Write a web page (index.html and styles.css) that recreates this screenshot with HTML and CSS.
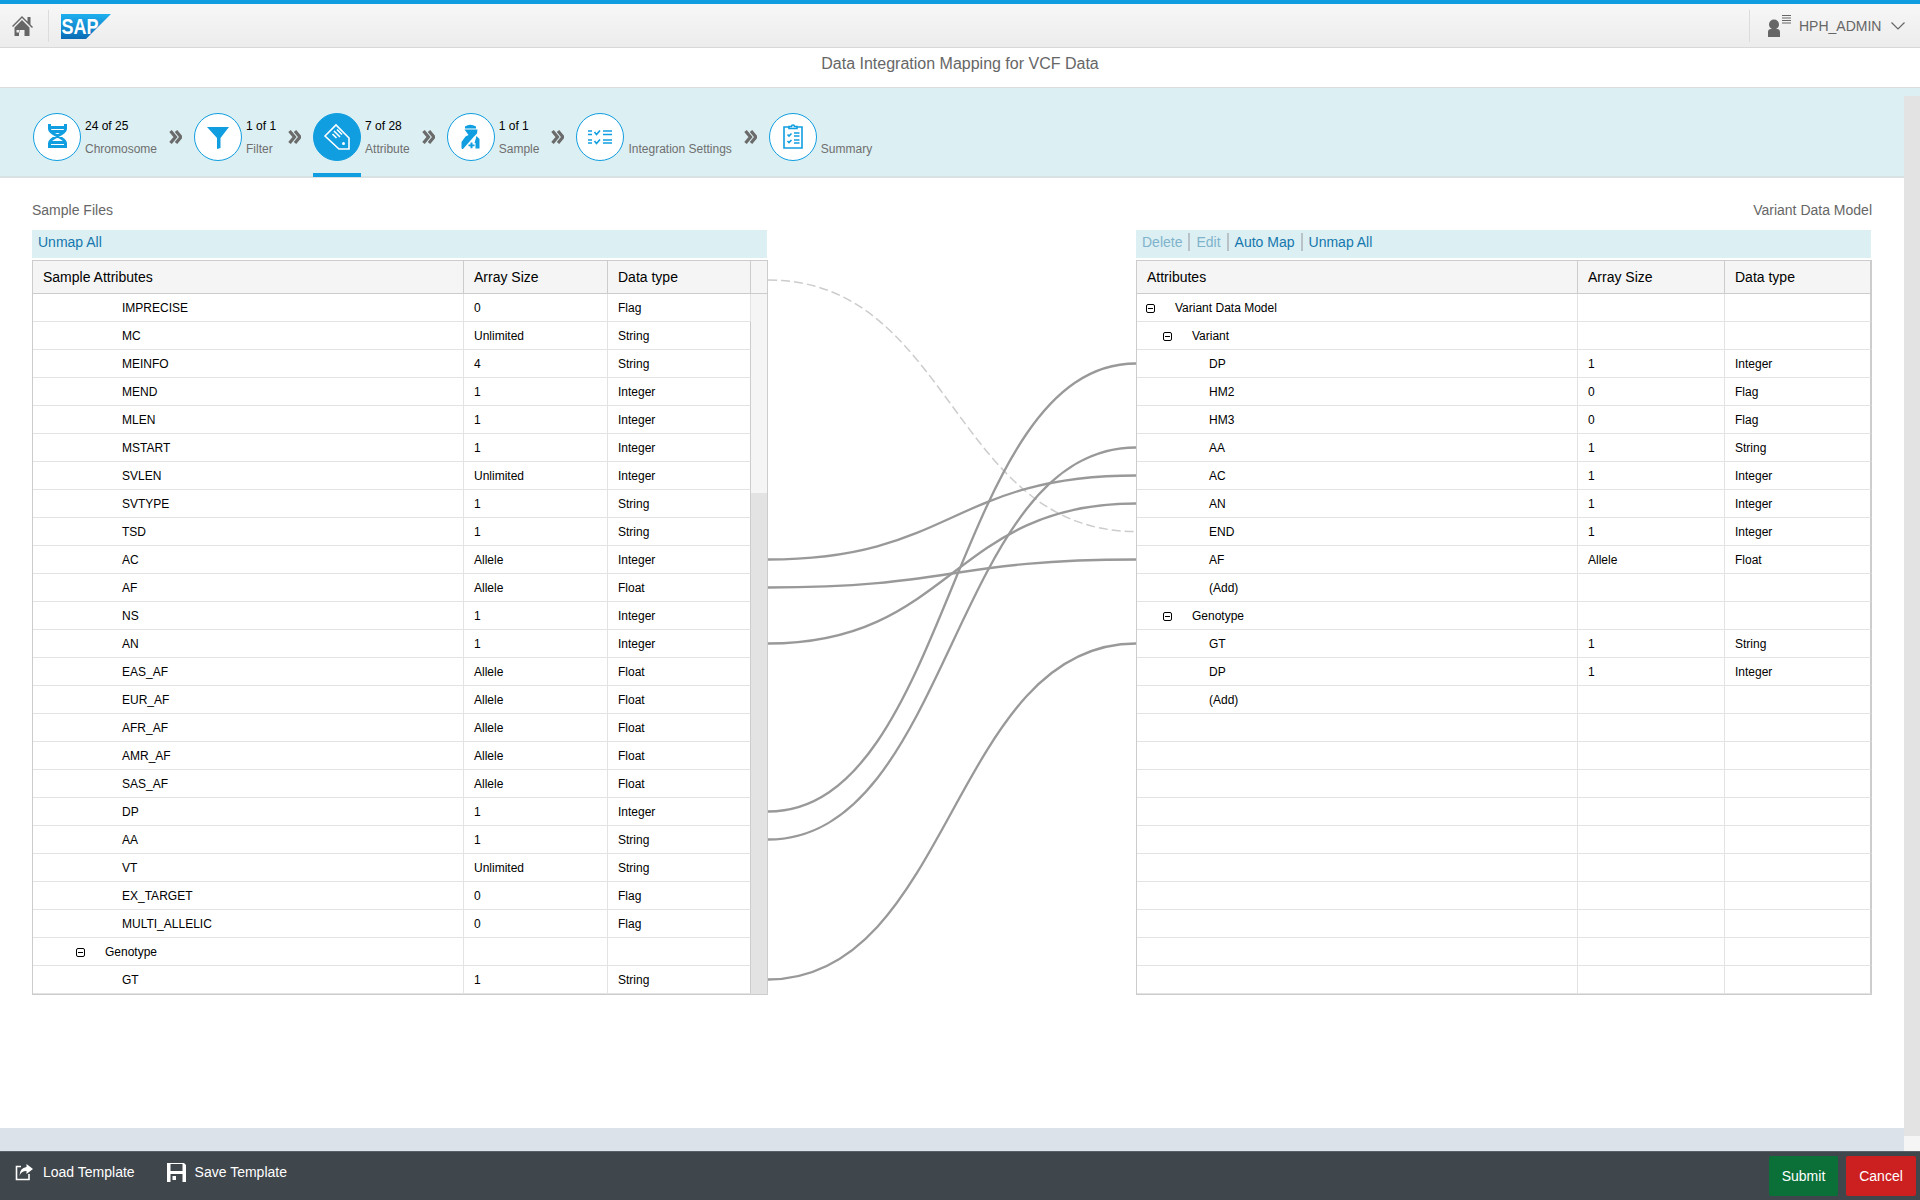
FILE: index.html
```html
<!DOCTYPE html>
<html lang="en">
<head>
  <meta charset="UTF-8" />
  <title>Data Integration Mapping for VCF Data</title>
  <link rel="stylesheet" href="styles.css">
</head>
<body>
  <div class="app">
    <!-- Shell header -->
    <header class="topbar">
      <div class="topbar-left">
        <a class="home" href="#">
          <svg width="22" height="22" viewBox="0 0 22 22"><path class="fill-grey" d="M1 11 11 1l5.500 5.500V2h3v7.500L22 12l-1 1-10-10L2 12z"/><path class="fill-grey" fill-rule="evenodd" d="M3.500 12.500 11 5l7.500 7.500V21h-5v-6h-5v2.500H8V15H5.500v2.500H8V21H3.500z"/></svg>
        </a>
        <svg class="sap-logo" width="50" height="25" viewBox="0 0 50 25">
          <defs><linearGradient id="sapBlue" x1="0" y1="0" x2="0" y2="1"><stop offset="0" stop-color="#1eb0ef"/><stop offset="1" stop-color="#0a6cb5"/></linearGradient></defs>
          <path fill="url(#sapBlue)" d="M0 0h50L25 25H0z"/>
          <text class="sap-text" x="0.500" y="19.500" textLength="37" lengthAdjust="spacingAndGlyphs">SAP</text>
        </svg>
      </div>
      <div class="topbar-right">
        <svg width="24" height="24" viewBox="0 0 24 24"><circle class="fill-grey" cx="6" cy="10.500" r="5"/><path class="fill-grey" d="M0 23v-5q0-3 3-3h6q3 0 3 3v5z"/><path class="line-grey" d="M14 1.500h9M14 4h9M14 6.500h9M14 9h9"/></svg>
        <span class="user-name">HPH_ADMIN</span>
        <svg width="14" height="10" viewBox="0 0 14 10"><path class="line-grey" d="M.5 1.500 7 8l6.500-6.500"/></svg>
      </div>
    </header>

    <div class="page-title">Data Integration Mapping for VCF Data</div>

    <!-- Wizard steps -->
    <nav class="steps">
      <div class="step">
        <div class="step-icon">
          <svg width="48" height="48" viewBox="0 0 48 48"><path class="line-blue thick" d="M16.500 11v5c0 6 16 8 16 14v5M32.500 11v5c0 6-16 8-16 14v5M16.500 14.500h16M17 18.500h15M17 29.500h15M16.500 33.500h16"/></svg>
        </div>
        <div class="step-text"><div class="step-count">24 of 25</div><div class="step-label">Chromosome</div></div>
      </div>
      <svg class="chevrons" width="13" height="14" viewBox="0 0 13 14"><path d="M1.500 1 6.500 7 1.500 13M7 1 12 7 7 13"/></svg>
      <div class="step">
        <div class="step-icon">
          <svg width="48" height="48" viewBox="0 0 48 48"><path class="fill-blue" d="M13 14h22L26.500 25v10L23 36V25z"/></svg>
        </div>
        <div class="step-text"><div class="step-count">1 of 1</div><div class="step-label">Filter</div></div>
      </div>
      <svg class="chevrons" width="13" height="14" viewBox="0 0 13 14"><path d="M1.500 1 6.500 7 1.500 13M7 1 12 7 7 13"/></svg>
      <div class="step active">
        <div class="step-icon">
          <svg width="48" height="48" viewBox="0 0 48 48"><path class="line-white" d="M12 23 23 12 36 25v11H26z"/><path class="line-white" d="M21 18l6 6M19.500 21l4 4M24 16.500l5 5"/><circle class="fill-white" cx="30.500" cy="30.500" r="1.500"/></svg>
        </div>
        <div class="step-text"><div class="step-count">7 of 28</div><div class="step-label">Attribute</div></div>
      </div>
      <svg class="chevrons" width="13" height="14" viewBox="0 0 13 14"><path d="M1.500 1 6.500 7 1.500 13M7 1 12 7 7 13"/></svg>
      <div class="step">
        <div class="step-icon">
          <svg width="48" height="48" viewBox="0 0 48 48"><path class="fill-blue" d="M18 13.500q5-3.500 11 0v2H18zM17.500 16.500h13l-.5 4-2.500 2.500L16 36h-1l-.5-1v-6l4-5.500 3-1.500z"/><path class="fill-blue" d="M29.500 23l3 3v9.500h-4V30l-1 0z"/><path class="fill-blue" d="M23.500 29.500h2v2h2v1.800h-2v2h-2v-2h-2v-1.800h2z"/></svg>
        </div>
        <div class="step-text"><div class="step-count">1 of 1</div><div class="step-label">Sample</div></div>
      </div>
      <svg class="chevrons" width="13" height="14" viewBox="0 0 13 14"><path d="M1.500 1 6.500 7 1.500 13M7 1 12 7 7 13"/></svg>
      <div class="step">
        <div class="step-icon">
          <svg width="48" height="48" viewBox="0 0 48 48"><path class="line-blue" d="M12 18h4M12 21.500h4M12 27h4M12 30h4M27 18h9M27 21.500h9M27 27h9M27 30h9"/><path class="line-blue" d="M18.500 19l2 2.500 3.500-4M18.500 28l2 2.500 3.500-4"/></svg>
        </div>
        <div class="step-text"><div class="step-count"></div><div class="step-label">Integration Settings</div></div>
      </div>
      <svg class="chevrons" width="13" height="14" viewBox="0 0 13 14"><path d="M1.500 1 6.500 7 1.500 13M7 1 12 7 7 13"/></svg>
      <div class="step">
        <div class="step-icon">
          <svg width="48" height="48" viewBox="0 0 48 48"><path class="line-blue" d="M20 14h-5v21h18V14h-5"/><path class="line-blue" d="M20 15.500h8V13.500h-2.500a1.500 1.500 0 0 0-3 0H20z"/><path class="line-blue" d="M18.500 21.500l1.500 1.500 2.500-2.500M18.500 28l1.500 1.500 2.500-2.500M25 20h5.500M25 23h5.500M25 27h5.500M25 30h5.500"/></svg>
        </div>
        <div class="step-text"><div class="step-count"></div><div class="step-label">Summary</div></div>
      </div>
    </nav>

    <main class="mapping">
      <section class="side">
        <div class="side-title">Sample Files</div>
        <div class="toolbar"><a class="tool">Unmap All</a></div>
        <table class="grid grid-source">
          <thead>
            <tr><th>Sample Attributes</th><th>Array Size</th><th>Data type</th><th></th></tr>
          </thead>
          <tbody>
            <tr><td class="lvl-3">IMPRECISE</td><td>0</td><td>Flag</td><td class="scroll-cell" rowspan="25"></td></tr>
            <tr><td class="lvl-3">MC</td><td>Unlimited</td><td>String</td></tr>
            <tr><td class="lvl-3">MEINFO</td><td>4</td><td>String</td></tr>
            <tr><td class="lvl-3">MEND</td><td>1</td><td>Integer</td></tr>
            <tr><td class="lvl-3">MLEN</td><td>1</td><td>Integer</td></tr>
            <tr><td class="lvl-3">MSTART</td><td>1</td><td>Integer</td></tr>
            <tr><td class="lvl-3">SVLEN</td><td>Unlimited</td><td>Integer</td></tr>
            <tr><td class="lvl-3">SVTYPE</td><td>1</td><td>String</td></tr>
            <tr><td class="lvl-3">TSD</td><td>1</td><td>String</td></tr>
            <tr><td class="lvl-3">AC</td><td>Allele</td><td>Integer</td></tr>
            <tr><td class="lvl-3">AF</td><td>Allele</td><td>Float</td></tr>
            <tr><td class="lvl-3">NS</td><td>1</td><td>Integer</td></tr>
            <tr><td class="lvl-3">AN</td><td>1</td><td>Integer</td></tr>
            <tr><td class="lvl-3">EAS_AF</td><td>Allele</td><td>Float</td></tr>
            <tr><td class="lvl-3">EUR_AF</td><td>Allele</td><td>Float</td></tr>
            <tr><td class="lvl-3">AFR_AF</td><td>Allele</td><td>Float</td></tr>
            <tr><td class="lvl-3">AMR_AF</td><td>Allele</td><td>Float</td></tr>
            <tr><td class="lvl-3">SAS_AF</td><td>Allele</td><td>Float</td></tr>
            <tr><td class="lvl-3">DP</td><td>1</td><td>Integer</td></tr>
            <tr><td class="lvl-3">AA</td><td>1</td><td>String</td></tr>
            <tr><td class="lvl-3">VT</td><td>Unlimited</td><td>String</td></tr>
            <tr><td class="lvl-3">EX_TARGET</td><td>0</td><td>Flag</td></tr>
            <tr><td class="lvl-3">MULTI_ALLELIC</td><td>0</td><td>Flag</td></tr>
            <tr><td class="lvl-2"><span class="toggle source-toggle"></span>Genotype</td><td></td><td></td></tr>
            <tr><td class="lvl-3">GT</td><td>1</td><td>String</td></tr>
          </tbody>
        </table>
      </section>

      <svg class="links" width="368" height="734" viewBox="0 260 368 734">
        <path class="link-pending" d="M0 280C184 280 184 531.500 368 531.500"/>
        <path class="link" d="M0 559.500C184 559.500 184 475.500 368 475.500"/>
        <path class="link" d="M0 587.500C184 587.500 184 559.500 368 559.500"/>
        <path class="link" d="M0 643.500C184 643.500 184 503.500 368 503.500"/>
        <path class="link" d="M0 811.500C184 811.500 184 363.500 368 363.500"/>
        <path class="link" d="M0 839.500C184 839.500 184 447.500 368 447.500"/>
        <path class="link" d="M0 979.500C184 979.500 184 643.500 368 643.500"/>
      </svg>

      <section class="side">
        <div class="side-title align-right">Variant Data Model</div>
        <div class="toolbar">
          <a class="tool disabled">Delete</a>
          <a class="tool disabled">Edit</a>
          <a class="tool">Auto Map</a>
          <a class="tool">Unmap All</a>
        </div>
        <table class="grid grid-target">
          <thead>
            <tr><th>Attributes</th><th>Array Size</th><th>Data type</th></tr>
          </thead>
          <tbody>
            <tr><td class="lvl-1"><span class="toggle"></span>Variant Data Model</td><td></td><td></td></tr>
            <tr><td class="lvl-2"><span class="toggle"></span>Variant</td><td></td><td></td></tr>
            <tr><td class="lvl-3">DP</td><td>1</td><td>Integer</td></tr>
            <tr><td class="lvl-3">HM2</td><td>0</td><td>Flag</td></tr>
            <tr><td class="lvl-3">HM3</td><td>0</td><td>Flag</td></tr>
            <tr><td class="lvl-3">AA</td><td>1</td><td>String</td></tr>
            <tr><td class="lvl-3">AC</td><td>1</td><td>Integer</td></tr>
            <tr><td class="lvl-3">AN</td><td>1</td><td>Integer</td></tr>
            <tr><td class="lvl-3">END</td><td>1</td><td>Integer</td></tr>
            <tr><td class="lvl-3">AF</td><td>Allele</td><td>Float</td></tr>
            <tr><td class="lvl-3">(Add)</td><td></td><td></td></tr>
            <tr><td class="lvl-2"><span class="toggle"></span>Genotype</td><td></td><td></td></tr>
            <tr><td class="lvl-3">GT</td><td>1</td><td>String</td></tr>
            <tr><td class="lvl-3">DP</td><td>1</td><td>Integer</td></tr>
            <tr><td class="lvl-3">(Add)</td><td></td><td></td></tr>
            <tr><td></td><td></td><td></td></tr>
            <tr><td></td><td></td><td></td></tr>
            <tr><td></td><td></td><td></td></tr>
            <tr><td></td><td></td><td></td></tr>
            <tr><td></td><td></td><td></td></tr>
            <tr><td></td><td></td><td></td></tr>
            <tr><td></td><td></td><td></td></tr>
            <tr><td></td><td></td><td></td></tr>
            <tr><td></td><td></td><td></td></tr>
            <tr><td></td><td></td><td></td></tr>
          </tbody>
        </table>
      </section>
    </main>

    <div class="hscroll"></div>

    <footer class="footer">
      <div class="footer-left">
        <a class="footer-link">
          <svg width="19" height="18" viewBox="0 0 19 18"><path class="line-white" d="M6 3.500H1.500V16.500H14V11"/><path class="fill-white" d="M11.500 1 18 6l-6.500 5V8Q6 8 4.500 13 4.500 5 11.500 4z"/></svg>
          Load Template
        </a>
        <a class="footer-link">
          <svg width="19" height="19" viewBox="0 0 19 19"><path class="fill-white" fill-rule="evenodd" d="M0 0h17l2 2v17H0zM3.500 1v7h12V1zM3.500 11v8h12v-8zM5.500 13h3.500v4H5.500z"/></svg>
          Save Template
        </a>
      </div>
      <div class="footer-right">
        <button class="btn btn-submit">Submit</button>
        <button class="btn btn-cancel">Cancel</button>
      </div>
    </footer>

    <div class="vscroll"><div class="vscroll-thumb"></div></div>
  </div>
</body>
</html>
```

FILE: styles.css
```css
* { margin: 0; padding: 0; box-sizing: border-box; }

body {
  font-family: "Liberation Sans", Arial, sans-serif;
  font-size: 14px;
  color: #000;
  background: #fff;
  overflow: hidden;
}

a { cursor: pointer; text-decoration: none; }

.app {
  position: relative;
  display: flex;
  flex-direction: column;
  height: 100vh;
}

/* svg helpers */
.fill-grey { fill: #666; }
.fill-blue { fill: #109ee0; }
.fill-white { fill: #fff; }
.line-grey { fill: none; stroke: #666; stroke-width: 1.2; }
.line-blue { fill: none; stroke: #109ee0; stroke-width: 1.6; }
.line-blue.thick { stroke-width: 3; }
.line-white { fill: none; stroke: #fff; stroke-width: 1.6; }

/* Top bar */
.topbar {
  height: 48px;
  flex: none;
  display: flex;
  justify-content: space-between;
  background: linear-gradient(#f7f7f7, #ececec);
  border-top: 4px solid #109ee0;
  border-bottom: 1px solid #d8d8d8;
}

.topbar-left, .topbar-right {
  display: flex;
  align-items: center;
}

.home {
  display: flex;
  width: 49px;
  height: 32px;
  padding-left: 11px;
  align-items: center;
  border-right: 1px solid #dcdcdc;
}

.sap-logo { margin-left: 12px; align-self: flex-start; margin-top: 10px; }

.sap-text {
  font-size: 22px;
  font-weight: bold;
  fill: #fff;
}

.topbar-right {
  height: 32px;
  align-self: center;
  width: 171px;
  padding-left: 18px;
  border-left: 1px solid #dcdcdc;
}

.user-name {
  margin-left: 7px;
  margin-right: 10px;
  color: #666;
}

/* Title */
.page-title {
  height: 40px;
  flex: none;
  padding-top: 6px;
  line-height: 20px;
  text-align: center;
  font-size: 16px;
  color: #666;
  border-bottom: 1px solid #dcdcdc;
}

/* Steps */
.steps {
  height: 90px;
  flex: none;
  display: flex;
  align-items: flex-start;
  gap: 12px;
  padding: 25px 0 0 33px;
  background: #dceff3;
  border-bottom: 2px solid #d9e2e3;
}

.step {
  display: flex;
  align-items: center;
  gap: 4px;
}

.step-icon {
  position: relative;
  width: 48px;
  height: 48px;
  border: 1px solid #109ee0;
  border-radius: 50%;
  background: #fff;
}

.step-icon svg {
  display: block;
  margin: -1px;
}

.step.active .step-icon { background: #109ee0; }

.step.active .step-icon::after {
  content: "";
  position: absolute;
  left: -1px;
  bottom: -17px;
  width: 48px;
  height: 4px;
  background: #109ee0;
}

.step-text {
  padding-top: 2px;
  font-size: 12px;
  line-height: 23px;
}

.step-count { min-height: 23px; }
.step-label { color: #6f6f6f; white-space: nowrap; }

.chevrons {
  margin-top: 17px;
  fill: none;
  stroke: #6b6b6b;
  stroke-width: 3.2;
}

/* Mapping area */
.mapping {
  flex: 1;
  display: flex;
  width: 1904px;
  padding: 0 32px;
  justify-content: space-between;
  min-height: 0;
}

.side { width: 736px; }

.side-title {
  margin-top: 22px;
  margin-bottom: 10px;
  line-height: 20px;
  color: #666;
}

.align-right { text-align: right; }

.toolbar {
  display: flex;
  height: 28px;
  margin-bottom: 2px;
  padding: 0 6px;
  background: #dceff3;
  line-height: 24px;
  width: 735px;
}

.tool {
  color: #1477ad;
  height: 18px;
  margin-top: 3px;
  line-height: 18px;
  padding-right: 6px;
  margin-right: 6px;
  border-right: 2px solid #b9c2c6;
}

.tool:last-child { border-right: none; }
.tool.disabled { color: #7fb3cc; }

.links {
  flex: none;
  margin-top: 82px;
  overflow: visible;
}

.link { fill: none; stroke: #999; stroke-width: 2.3; }
.link-pending { fill: none; stroke: #ccc; stroke-width: 1.5; stroke-dasharray: 9 4; }

/* Tables */
.grid {
  table-layout: fixed;
  border-collapse: separate;
  border-spacing: 0;
  border-left: 1px solid #ccc;
  border-top: 1px solid #ccc;
  border-bottom: 1px solid #ccc;
  width: 736px;
}

.grid-source th:nth-child(1) { width: 431px; }
.grid-source th:nth-child(2) { width: 144px; }
.grid-source th:nth-child(3) { width: 143px; }
.grid-source th:nth-child(4) { width: 17px; }

.grid-target th:nth-child(1) { width: 441px; }
.grid-target th:nth-child(2) { width: 147px; }
.grid-target th:nth-child(3) { width: 147px; border-right-width: 2px; }
.grid-target td:last-child { border-right-width: 2px; }

.grid th {
  height: 33px;
  padding: 0 0 0 10px;
  text-align: left;
  font-weight: normal;
  font-size: 14px;
  background: #f5f5f5;
  border-right: 1px solid #ccc;
  border-bottom: 1px solid #ccc;
}

.grid td {
  height: 28px;
  padding: 0 0 0 10px;
  font-size: 12px;
  border-right: 1px solid #e3e3e3;
  border-bottom: 1px solid #e3e3e3;
}

.grid td:last-child { border-right-color: #ccc; }

.grid td.lvl-1 { padding-left: 9px; }
.grid td.lvl-2 { padding-left: 26px; }
.grid td.lvl-3 { padding-left: 72px; white-space: nowrap; }
.grid-source td.lvl-2 { padding-left: 43px; }
.grid-source td.lvl-3 { padding-left: 89px; }

.toggle {
  display: inline-block;
  position: relative;
  width: 9px;
  height: 9px;
  margin-right: 20px;
  vertical-align: -1px;
  border: 1px solid #000;
  border-radius: 2px;
}

.toggle::after {
  content: "";
  position: absolute;
  left: 1px;
  right: 1px;
  top: 3px;
  height: 1px;
  background: #000;
}

.source-toggle { margin-right: 20px; }

.grid td.scroll-cell {
  padding: 0;
  background: linear-gradient(#f5f5f5 199px, #e3e3e3 199px);
}

/* Scrollbars */
.hscroll {
  height: 23px;
  flex: none;
  width: 1904px;
  background: #dce2e9;
}

.vscroll {
  position: absolute;
  top: 96px;
  right: 0;
  bottom: 49px;
  width: 16px;
  background: #f5f5f5;
}

.vscroll-thumb {
  height: 1040px;
  background: #e3e3e3;
}

/* Footer */
.footer {
  height: 49px;
  flex: none;
  display: flex;
  justify-content: space-between;
  background: #3f464c;
  border-top: 1px solid #5a6066;
}

.footer-left {
  display: flex;
  gap: 32px;
  padding-left: 15px;
}

.footer-link {
  display: flex;
  align-items: center;
  gap: 9px;
  height: 40px;
  color: #fff;
}

.footer-right {
  display: flex;
  gap: 8px;
  padding: 4px 4px 0 0;
}

.btn {
  height: 40px;
  border: none;
  border-radius: 2px;
  color: #fff;
  font-family: inherit;
  font-size: 14px;
  cursor: pointer;
}

.btn-submit { width: 69px; background: #0a7038; }
.btn-cancel { width: 70px; background: #cc1f1f; }
```
